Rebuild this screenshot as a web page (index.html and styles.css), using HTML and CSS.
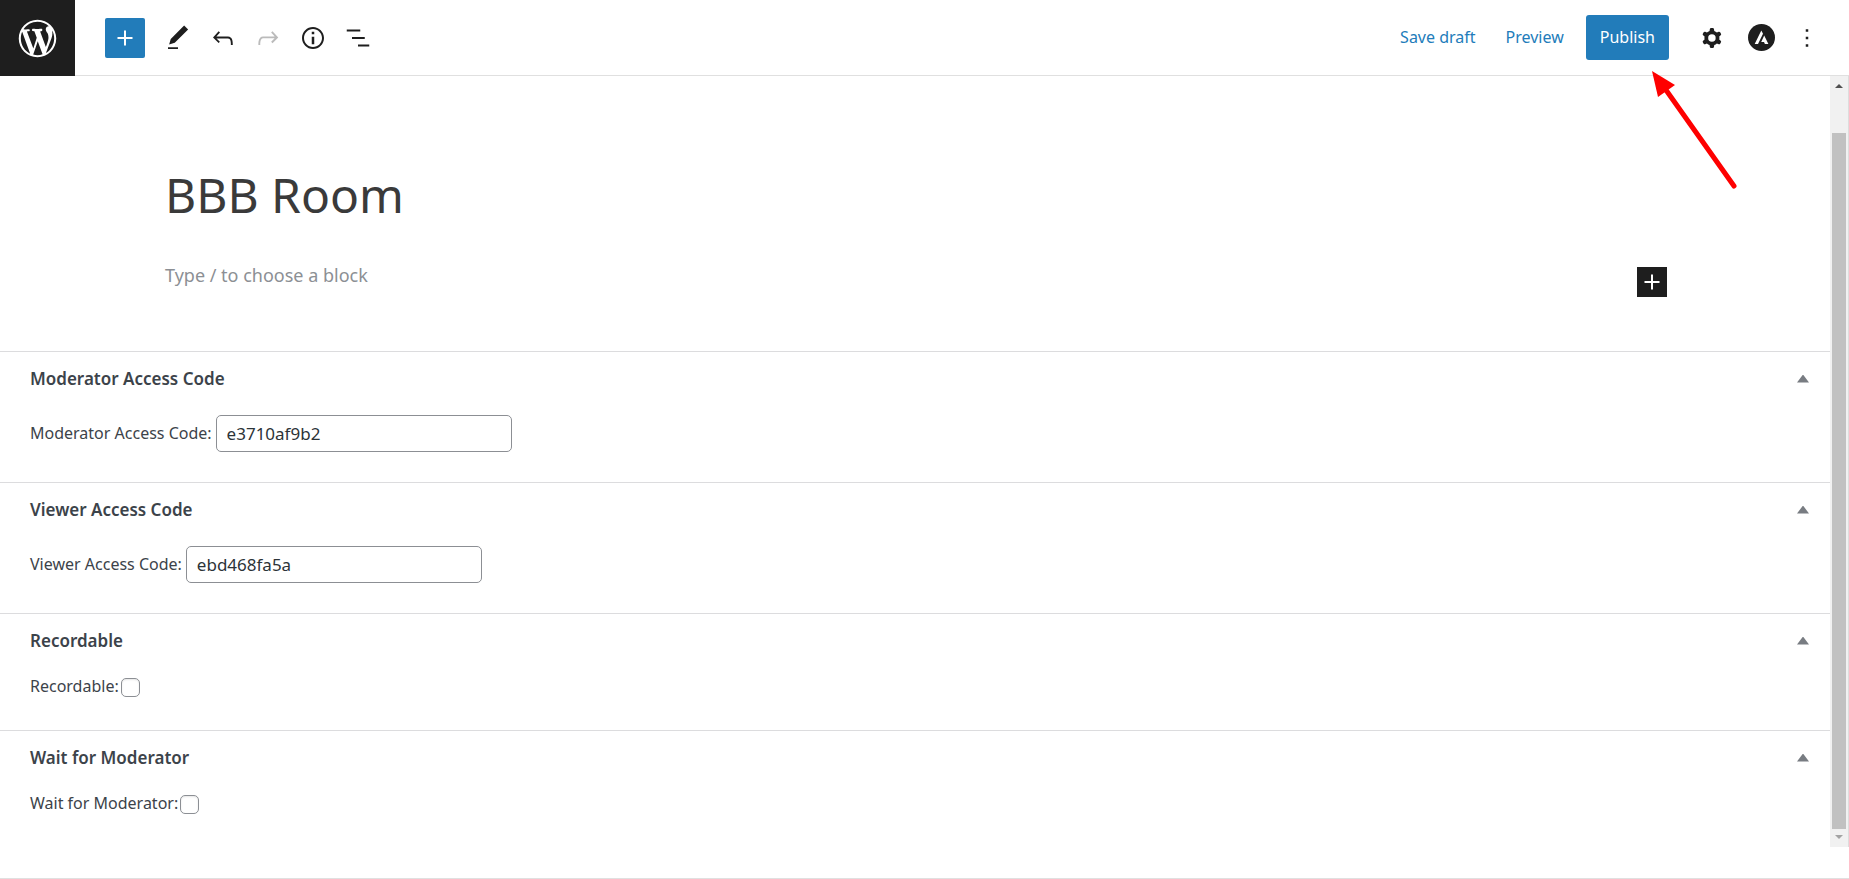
FILE: index.html
```
<!DOCTYPE html>
<html lang="en">
<head>
  <meta charset="UTF-8">
  <title>Edit Room</title>
  <link rel="stylesheet" href="styles.css">
</head>
<body>

  <header class="topbar">
    <a class="logo" href="#" aria-label="View rooms">
      <svg viewBox="-2 -2 24 24"><path d="M20 10c0-5.51-4.49-10-10-10C4.48 0 0 4.49 0 10c0 5.52 4.48 10 10 10 5.51 0 10-4.48 10-10zM7.78 15.37L4.37 6.22c.55-.02 1.17-.08 1.17-.08.5-.06.44-1.13-.06-1.11 0 0-1.45.11-2.37.11-.18 0-.37 0-.58-.01C4.12 2.69 6.87 1.11 10 1.11c2.33 0 4.45.87 6.05 2.34-.68-.11-1.65.39-1.65 1.58 0 .74.45 1.36.9 2.1.35.61.55 1.36.55 2.46 0 1.49-1.4 5-1.4 5l-3.03-8.37c.54-.02.82-.17.82-.17.5-.05.44-1.25-.06-1.22 0 0-1.44.12-2.38.12-.87 0-2.33-.12-2.33-.12-.5-.03-.56 1.2-.06 1.22l.92.08 1.26 3.41zM17.41 10c.24-.64.74-1.87.43-4.25.7 1.29 1.05 2.71 1.05 4.25 0 3.29-1.73 6.24-4.4 7.78.97-2.59 1.94-5.2 2.92-7.78zM6.1 18.09C3.12 16.65 1.11 13.53 1.11 10c0-1.3.23-2.48.72-3.59C3.25 10.3 4.67 14.2 6.1 18.09zm4.03-6.63l2.58 6.98c-.86.29-1.76.45-2.71.45-.79 0-1.57-.11-2.29-.33.81-2.38 1.62-4.74 2.42-7.1z"/></svg>
    </a>

    <button class="inserter" type="button" aria-label="Add block">
      <svg viewBox="0 0 24 24"><path d="M18 11.2h-5.2V6h-1.6v5.2H6v1.6h5.2V18h1.6v-5.2H18z"/></svg>
    </button>

    <div class="tools">
      <button class="tool" type="button" aria-label="Tools">
        <svg viewBox="0 0 24 24"><path d="M20.1 5.1L16.9 2 6.2 12.7l-1.3 4.4 4.5-1.3L20.1 5.1zM4 20.8h8v-1.5H4v1.5z"/></svg>
      </button>
      <button class="tool" type="button" aria-label="Undo">
        <svg viewBox="0 0 24 24"><path d="M18.3 11.7c-.6-.6-1.4-.9-2.3-.9H6.7l2.9-3.3-1.1-1-4.5 5L8.5 16l1-1-2.7-2.7H16c.5 0 .9.2 1.3.5 1 1 1 3.4 1 4.5v.3h1.5v-.2c0-1.5 0-4.3-1.5-5.7z"/></svg>
      </button>
      <button class="tool" type="button" aria-label="Redo" disabled>
        <svg viewBox="0 0 24 24"><path d="M15.6 6.5l-1.1 1 2.9 3.3H8c-.9 0-1.7.3-2.3.9-1.4 1.5-1.4 4.2-1.4 5.6v.2h1.5v-.3c0-1.1 0-3.5 1-4.5.3-.3.7-.5 1.3-.5h9.2L14.5 15l1.1 1.1 4.6-4.6-4.6-5z"/></svg>
      </button>
      <button class="tool" type="button" aria-label="Details">
        <svg viewBox="0 0 24 24"><path d="M12 3.2c-4.8 0-8.8 3.9-8.8 8.8 0 4.8 3.9 8.8 8.8 8.8 4.8 0 8.8-3.9 8.8-8.8 0-4.8-4-8.8-8.8-8.8zm0 16c-4 0-7.2-3.3-7.2-7.2C4.8 8 8 4.8 12 4.8s7.2 3.3 7.2 7.2c0 4-3.2 7.2-7.2 7.2zM11 17h2v-6h-2v6zm0-8h2V7h-2v2z"/></svg>
      </button>
      <button class="tool" type="button" aria-label="List view">
        <svg viewBox="0 0 24 24"><path d="M13.8 5.2H3v1.5h10.8V5.2zm-1.8 12v1.5h9v-1.5h-9zm5.4-6H7.2v1.5h10.2v-1.5z"/></svg>
      </button>
    </div>

    <div class="actions">
      <button class="link" type="button">Save draft</button>
      <button class="link" type="button">Preview</button>
      <button class="publish" type="button">Publish</button>
    </div>

    <div class="tools settings">
      <button class="tool cog" type="button" aria-label="Settings">
        <svg viewBox="0 0 24 24"><path fill-rule="evenodd" d="M10.289 4.836A1 1 0 0111.275 4h1.306a1 1 0 01.987.836l.244 1.466c.787.26 1.503.679 2.108 1.218l1.393-.522a1 1 0 011.216.437l.653 1.13a1 1 0 01-.23 1.273l-1.148.944a6.025 6.025 0 010 2.435l1.149.946a1 1 0 01.23 1.272l-.653 1.13a1 1 0 01-1.216.437l-1.394-.522c-.605.54-1.32.958-2.108 1.218l-.244 1.466a1 1 0 01-.987.836h-1.306a1 1 0 01-.986-.836l-.244-1.466a5.995 5.995 0 01-2.108-1.218l-1.394.522a1 1 0 01-1.217-.436l-.653-1.131a1 1 0 01.23-1.272l1.149-.946a6.026 6.026 0 010-2.435l-1.148-.944a1 1 0 01-.23-1.272l.653-1.131a1 1 0 011.217-.437l1.393.522a5.994 5.994 0 012.108-1.218l.244-1.466zM14.929 12a3 3 0 11-6 0 3 3 0 016 0z"/></svg>
      </button>
      <button class="tool" type="button" aria-label="Astra settings">
        <svg viewBox="0 0 30 30"><circle cx="14.5" cy="14.5" r="13.5"/><path fill="#fff" d="M14.3 7.4l1.7 3.3-5 10.3H7.7zM17.2 12.6l4.2 8.4h-3.5l-.9-2.1h-2.8z"/></svg>
      </button>
      <button class="tool" type="button" aria-label="Options">
        <svg viewBox="0 0 24 24"><path d="M13 19h-2v-2h2v2zm0-6h-2v-2h2v2zm0-6h-2V5h2v2z"/></svg>
      </button>
    </div>

    <!-- arrow pointing at the publish button -->
    <svg class="arrow" viewBox="0 0 90 122"><path d="M14 19L82 115" fill="none" stroke="#fe0000" stroke-width="5" stroke-linecap="round"/><path d="M0 0L23 14 6 26z" fill="#fe0000"/></svg>
  </header>

  <div class="main">
    <main class="content">
      <div class="editor">
        <h1>BBB Room</h1>
        <div class="block">
          <p>Type / to choose a block</p>
          <button class="add" type="button" aria-label="Add block">
            <svg viewBox="0 0 24 24"><path d="M18 11.2h-5.2V6h-1.6v5.2H6v1.6h5.2V18h1.6v-5.2H18z"/></svg>
          </button>
        </div>
      </div>

      <section class="metabox">
        <div class="metabox-head">
          <h2>Moderator Access Code</h2>
          <button class="toggle" type="button" aria-label="Toggle panel"></button>
        </div>
        <div class="field">
          <label for="moderatorCode">Moderator Access Code:</label>
          <input type="text" id="moderatorCode" value="e3710af9b2">
        </div>
      </section>

      <section class="metabox">
        <div class="metabox-head">
          <h2>Viewer Access Code</h2>
          <button class="toggle" type="button" aria-label="Toggle panel"></button>
        </div>
        <div class="field">
          <label for="viewerCode">Viewer Access Code:</label>
          <input type="text" id="viewerCode" value="ebd468fa5a">
        </div>
      </section>

      <section class="metabox">
        <div class="metabox-head">
          <h2>Recordable</h2>
          <button class="toggle" type="button" aria-label="Toggle panel"></button>
        </div>
        <div class="field check">
          <label for="recordable">Recordable:</label>
          <input type="checkbox" id="recordable">
        </div>
      </section>

      <section class="metabox">
        <div class="metabox-head">
          <h2>Wait for Moderator</h2>
          <button class="toggle" type="button" aria-label="Toggle panel"></button>
        </div>
        <div class="field check">
          <label for="waitModerator">Wait for Moderator:</label>
          <input type="checkbox" id="waitModerator">
        </div>
      </section>
    </main>

    <div class="scrollbar">
      <span class="up"></span>
      <span class="thumb"></span>
      <span class="down"></span>
    </div>
  </div>

  <footer class="footer"></footer>

</body>
</html>
```
FILE: styles.css
```
* {
  box-sizing: border-box;
}

body {
  margin: 0;
  height: 100vh;
  display: flex;
  flex-direction: column;
  overflow: hidden;
  font-family: "Noto Sans", "Open Sans", sans-serif;
  font-size: 16px;
  color: #3c434a;
  background: #fff;
}

button {
  padding: 0;
  border: 0;
  background: none;
  font: inherit;
  cursor: pointer;
}

svg {
  display: block;
  fill: currentColor;
}

/* top bar */
.topbar {
  position: relative;
  display: flex;
  align-items: center;
  flex: none;
  height: 76px;
  padding-right: 27px;
  border-bottom: 1px solid #e0e0e0;
}

.logo {
  display: flex;
  align-items: center;
  justify-content: center;
  width: 75px;
  height: 76px;
  margin-bottom: -1px;
  background: #1e1e1e;
  color: #fff;
}

.logo svg {
  width: 45px;
  height: 45px;
}

.inserter {
  width: 40px;
  height: 40px;
  margin: 0 18px 0 30px;
  padding: 5px;
  border-radius: 2px;
  background: #227cba;
  color: #fff;
}

.tools {
  display: flex;
  gap: 15px;
}

.tool {
  width: 30px;
  height: 30px;
  color: #1e1e1e;
}

.tool:disabled {
  color: #bbb;
}

.cog {
  margin-right: 5px;
}

.actions {
  display: flex;
  align-items: center;
  gap: 30px;
  margin-left: auto;
  margin-right: 28px;
}

.link {
  padding-bottom: 2px;
  color: #227cba;
}

.publish {
  height: 45px;
  margin-left: -8px;
  padding: 0 14px 2px;
  border-radius: 3px;
  background: #227cba;
  color: #fff;
}

.arrow {
  position: absolute;
  top: 71px;
  right: 107px;
  width: 90px;
  height: 122px;
}

/* content */
.main {
  display: flex;
  flex: 1;
  min-height: 0;
}

.content {
  flex: 1;
}

.editor {
  padding: 84px 163px 54px 165px;
}

h1 {
  margin: 0;
  font-size: 48px;
  line-height: 70px;
  font-weight: 400;
  color: #3a3a3a;
}

.block {
  display: flex;
  align-items: flex-start;
  justify-content: space-between;
  padding-top: 31px;
}

.block p {
  margin: 0;
  font-size: 18px;
  line-height: 28px;
  color: #8c8f94;
}

.add {
  width: 30px;
  height: 30px;
  margin-top: 6px;
  background: #1e1e1e;
  color: #fff;
}

.metabox {
  padding: 0 21px 30px 30px;
  border-top: 1px solid #dcdcde;
}

.metabox-head {
  display: flex;
  align-items: center;
  justify-content: space-between;
  height: 53px;
  margin-bottom: 10px;
}

h2 {
  margin: 0;
  font-size: 17px;
  font-weight: 600;
}

.toggle {
  width: 12px;
  height: 8px;
  background: #787c82;
  clip-path: polygon(50% 0, 100% 100%, 0 100%);
}

.field {
  display: flex;
  align-items: center;
  gap: 4px;
}

.field label {
  padding-bottom: 2px;
}

.field input[type="text"] {
  width: 296px;
  height: 37px;
  padding: 0 10px;
  border: 1px solid #8c8f94;
  border-radius: 5px;
  font-family: inherit;
  font-size: 17px;
  color: #2c3338;
}

.check {
  gap: 2px;
  height: 20px;
  margin-bottom: 3px;
}

.field input[type="checkbox"] {
  appearance: none;
  width: 19px;
  height: 19px;
  margin: 0;
  border: 1px solid #8c8f94;
  border-radius: 5px;
  box-shadow: inset 0 1px 2px rgba(0, 0, 0, 0.1);
}

/* scrollbar */
.scrollbar {
  display: flex;
  flex-direction: column;
  align-items: center;
  width: 19px;
  padding: 8px 0;
  border-right: 1px solid #ddd;
  background: #f1f1f1;
}

.up,
.down {
  width: 8px;
  height: 4px;
  background: #505050;
  clip-path: polygon(50% 0, 100% 100%, 0 100%);
}

.down {
  background: #a3a3a3;
  clip-path: polygon(0 0, 100% 0, 50% 100%);
}

.thumb {
  flex: 1;
  width: 14px;
  margin: 45px 0 6px;
  background: #c1c1c1;
}

.footer {
  flex: none;
  height: 32px;
  border-bottom: 1px solid #e0e0e0;
}
```
